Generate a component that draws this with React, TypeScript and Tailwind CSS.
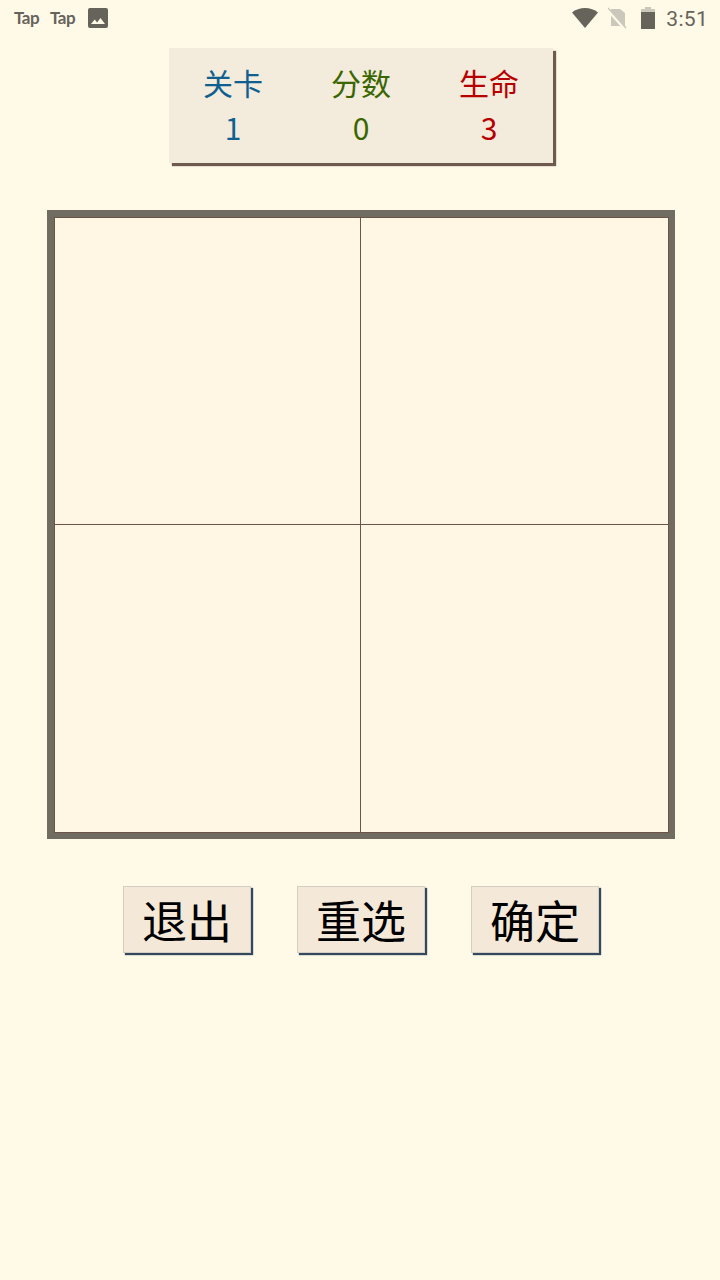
const cjk = "font-['Noto_Sans_CJK_SC','Noto_Sans',sans-serif]";

function Stat({ label, value, color }: { label: string; value: string; color: string }) {
  return (
    <div className={`flex w-[128px] flex-col items-center ${color}`}>
      <span className="h-[46px] text-[30px] leading-[46px]">{label}</span>
      <span className="h-[44px] text-[30px] leading-[44px]">{value}</span>
    </div>
  );
}

function GameButton({ label }: { label: string }) {
  return (
    <button className="flex h-[67px] w-[128px] items-center justify-center border border-[#d5cfc3] bg-[#f4e9d9] pb-[1px] text-[45px] leading-none text-black shadow-[2px_2px_1px_#34495e]">
      {label}
    </button>
  );
}

function StatusBar() {
  return (
    <div className="flex h-[36px] items-center justify-between pl-[14px] pr-[12px] text-[#66635b]">
      <div className="flex items-center">
        <span className="w-[36px] text-[17px] font-bold tracking-[-0.5px] font-['Lato',sans-serif]">Tap</span>
        <span className="w-[38px] text-[17px] font-bold tracking-[-0.5px] font-['Lato',sans-serif]">Tap</span>
        <svg width="20" height="20" viewBox="0 0 20 20">
          <path fill="#66635b" fillRule="evenodd" d="M2 0h16a2 2 0 0 1 2 2v16a2 2 0 0 1-2 2H2a2 2 0 0 1-2-2V2a2 2 0 0 1 2-2Zm1 16h14l-4.500-6-3.400 4.400-2.400-3L3 16Z" />
        </svg>
      </div>
      <div className="flex items-center">
        <svg width="26" height="20" viewBox="0 0 26 20" className="mr-[10px]">
          <path fill="#66635b" d="M0 4.500C3.500 1.700 8 0 13 0s9.500 1.700 13 4.500L13 20 0 4.500Z" />
        </svg>
        <svg width="20" height="22" viewBox="0 0 20 22" className="mr-[13px]">
          <path fill="#cbc8bb" d="M3 2h9l5 4v13H3V2Z" />
          <path stroke="#fff9e8" strokeWidth="3" d="M0 3l17 19" />
          <path stroke="#cbc8bb" strokeWidth="1.500" d="M0 1l18 20" />
        </svg>
        <svg width="14" height="22" viewBox="0 0 14 22" className="mr-[11px]">
          <path fill="#cbc8bb" d="M4 0h6v2h4v3H0V2h4V0Z" />
          <path fill="#66635b" d="M0 5h14v17H0V5Z" />
        </svg>
        <span className="mt-[3px] text-[21px] tracking-[0.3px] font-['Roboto',sans-serif]">3:51</span>
      </div>
    </div>
  );
}

export default function App() {
  return (
    <div className={`flex h-[1280px] w-[720px] flex-col bg-[#fff9e8] ${cjk}`}>
      <StatusBar />
      <div className="ml-[169px] mt-[12px] flex">
        <div className="flex h-[115px] w-[384px] items-center justify-center bg-[#f3ebdc] pb-[3px] shadow-[3px_3px_1px_#6e5a4e]">
          <Stat label="关卡" value="1" color="text-[#0f6090]" />
          <Stat label="分数" value="0" color="text-[#3a6600]" />
          <Stat label="生命" value="3" color="text-[#b70000]" />
        </div>
      </div>
      <div className="ml-[47px] mt-[47px] h-[629px] w-[628px] border-b-[6px] border-l-[7px] border-r-[6px] border-t-[7px] border-[#716c61] bg-[#fff7e3]">
        <div className="grid h-full w-full grid-cols-[306px_1fr] grid-rows-[307px_1fr] border border-[#6e5347]">
          <div className="border-b border-r border-[#6e5347]" />
          <div className="border-b border-[#6e5347]" />
          <div className="border-r border-[#6e5347]" />
          <div />
        </div>
      </div>
      <div className="ml-[123px] mt-[47px] flex gap-[46px]">
        <GameButton label="退出" />
        <GameButton label="重选" />
        <GameButton label="确定" />
      </div>
    </div>
  );
}
